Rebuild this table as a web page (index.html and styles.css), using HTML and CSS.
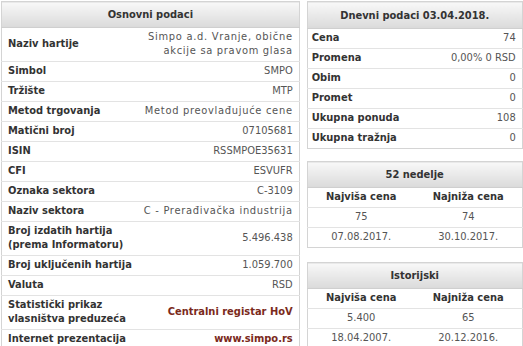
FILE: index.html
```html
<!DOCTYPE html>
<html>
<head>
<meta charset="utf-8">
<link rel="stylesheet" href="styles.css">
</head>
<body>
<div class="page">
  <table class="tbl main">
    <thead><tr><th colspan="2" class="hdr">Osnovni podaci</th></tr></thead>
    <tbody>
      <tr><td class="lbl">Naziv hartije</td><td class="val txt">Simpo a.d. Vranje, obične<br>akcije sa pravom glasa</td></tr>
      <tr><td class="lbl">Simbol</td><td class="val">SMPO</td></tr>
      <tr><td class="lbl">Tržište</td><td class="val">MTP</td></tr>
      <tr><td class="lbl">Metod trgovanja</td><td class="val txt">Metod preovlađujuće cene</td></tr>
      <tr><td class="lbl">Matični broj</td><td class="val">07105681</td></tr>
      <tr><td class="lbl">ISIN</td><td class="val">RSSMPOE35631</td></tr>
      <tr><td class="lbl">CFI</td><td class="val">ESVUFR</td></tr>
      <tr><td class="lbl">Oznaka sektora</td><td class="val">C-3109</td></tr>
      <tr><td class="lbl">Naziv sektora</td><td class="val txt">C - Prerađivačka industrija</td></tr>
      <tr><td class="lbl">Broj izdatih hartija<br>(prema Informatoru)</td><td class="val">5.496.438</td></tr>
      <tr><td class="lbl">Broj uključenih hartija</td><td class="val">1.059.700</td></tr>
      <tr><td class="lbl">Valuta</td><td class="val">RSD</td></tr>
      <tr><td class="lbl">Statistički prikaz<br>vlasništva preduzeća</td><td class="val"><a class="link">Centralni registar HoV</a></td></tr>
      <tr><td class="lbl">Internet prezentacija</td><td class="val"><a class="link">www.simpo.rs</a></td></tr>
    </tbody>
  </table>
  <div class="side">
    <table class="tbl">
      <thead><tr><th colspan="2" class="hdr">Dnevni podaci 03.04.2018.</th></tr></thead>
      <tbody>
        <tr><td class="lbl">Cena</td><td class="val">74</td></tr>
        <tr><td class="lbl">Promena</td><td class="val">0,00% 0 RSD</td></tr>
        <tr><td class="lbl">Obim</td><td class="val">0</td></tr>
        <tr><td class="lbl">Promet</td><td class="val">0</td></tr>
        <tr><td class="lbl">Ukupna ponuda</td><td class="val">108</td></tr>
        <tr><td class="lbl">Ukupna tražnja</td><td class="val">0</td></tr>
      </tbody>
    </table>
    <table class="tbl range">
      <thead><tr><th colspan="2" class="hdr">52 nedelje</th></tr></thead>
      <tbody>
        <tr><td class="sub">Najviša cena</td><td class="sub">Najniža cena</td></tr>
        <tr><td class="c">75</td><td class="c">74</td></tr>
        <tr><td class="c">07.08.2017.</td><td class="c">30.10.2017.</td></tr>
      </tbody>
    </table>
    <table class="tbl range">
      <thead><tr><th colspan="2" class="hdr">Istorijski</th></tr></thead>
      <tbody>
        <tr><td class="sub">Najviša cena</td><td class="sub">Najniža cena</td></tr>
        <tr><td class="c">5.400</td><td class="c">65</td></tr>
        <tr><td class="c">18.04.2007.</td><td class="c">20.12.2016.</td></tr>
      </tbody>
    </table>
  </div>
</div>
</body>
</html>
```

FILE: styles.css
```css
html, body {
  margin: 0;
  padding: 0;
  background: #fff;
}
body {
  font-family: "DejaVu Sans Condensed", "DejaVu Sans", sans-serif;
  font-size: 11px;
  color: #444;
}
.page {
  display: flex;
  align-items: flex-start;
  gap: 7px;
  padding: 1px 0 0 1px;
}
.tbl {
  border-collapse: collapse;
  border: 1px solid #d4d4d4;
}
.main {
  width: 297px;
}
.side {
  width: 216px;
  display: flex;
  flex-direction: column;
  gap: 12px;
}
.side .tbl {
  width: 216px;
}
.range + .range {
  margin-top: 2px;
}
.hdr {
  height: 26px;
  padding: 0;
  background: linear-gradient(#f8f8f8, #dadada);
  border-bottom: 1px solid #cfcfcf;
  font-weight: bold;
  color: #333;
  text-align: center;
}
.main .hdr {
  height: 25px;
}
.range .hdr {
  height: 25px;
}
td {
  padding: 2px 6px 3px 6px;
  line-height: 14px;
  height: 14px;
  border-bottom: 1px solid #e3e3e3;
  vertical-align: middle;
}
tr:last-child td {
  border-bottom: none;
}
.side .lbl {
  padding-left: 4px;
}
.lbl {
  font-weight: bold;
  color: #333;
  white-space: nowrap;
}
.val {
  text-align: right;
  color: #555;
  white-space: nowrap;
}
.txt {
  letter-spacing: 0.7px;
}
.link {
  color: #7b2a1c;
  font-weight: bold;
}
.sub {
  text-align: center;
  font-weight: bold;
  color: #333;
  width: 50%;
}
.c {
  text-align: center;
  color: #555;
}
```
